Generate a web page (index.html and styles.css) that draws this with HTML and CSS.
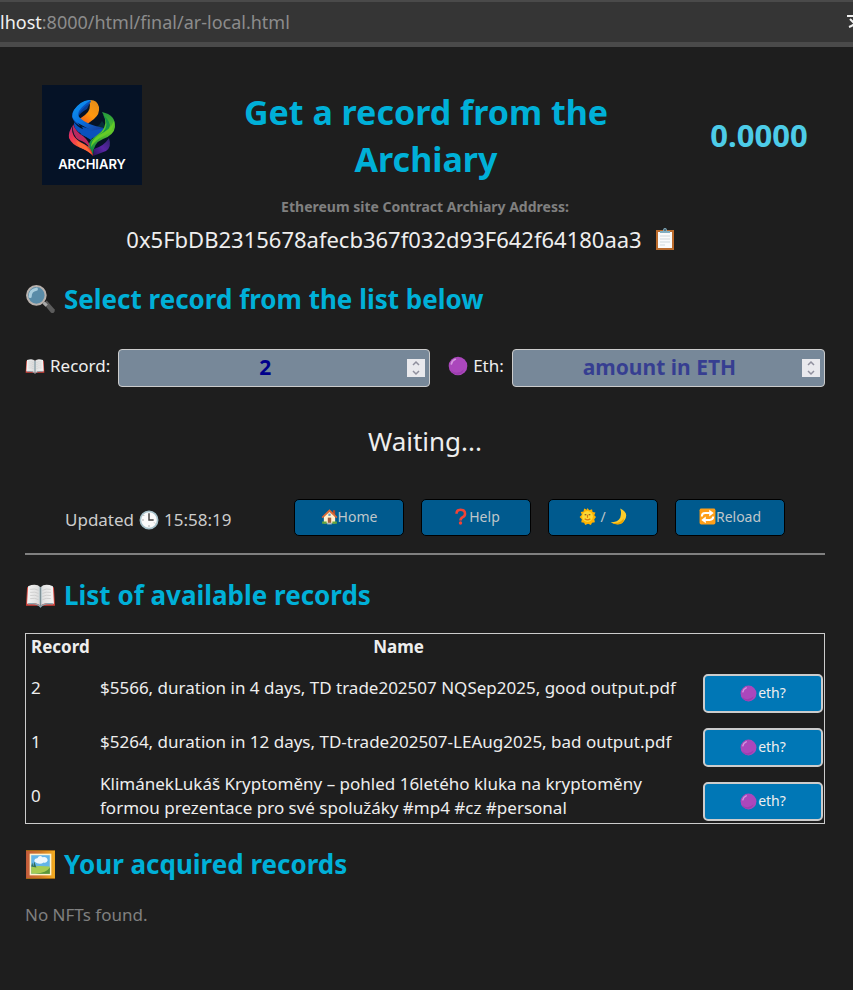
FILE: index.html
```html
<!DOCTYPE html>
<html lang="en">
<head>
<meta charset="utf-8">
<meta name="viewport" content="width=device-width, initial-scale=1">
<title>Archiary</title>
<link rel="stylesheet" href="styles.css">
</head>
<body>
<svg class="sprites" aria-hidden="true">
  <defs>
    <linearGradient id="g-frame" x2="1"><stop stop-color="#c45c3c"/><stop offset=".5" stop-color="#d07a28"/><stop offset="1" stop-color="#f5ad20"/></linearGradient>
    <linearGradient id="g-page" x2="1"><stop stop-color="#f4f4f4"/><stop offset=".42" stop-color="#dedede"/><stop offset=".5" stop-color="#9eb5bd"/><stop offset=".58" stop-color="#e2e2e2"/><stop offset="1" stop-color="#f4f4f4"/></linearGradient>
  </defs>
  <symbol id="i-search" viewBox="0 0 30 30">
    <path d="M18 19l3-3 7.500 8.500q1 2-.5 3t-3 0z" fill="#5c5c5c"/><path d="M18 18l3 3" stroke="#aaa" stroke-width="3"/>
    <circle cx="11" cy="11" r="9" fill="#5a8ca8" stroke="#b8b2ae" stroke-width="2"/><path d="M5 12q0-6 6-7" stroke="#a9cddd" stroke-width="3" fill="none" stroke-linecap="round"/>
  </symbol>
  <symbol id="i-book" viewBox="0 0 30 30">
    <path d="M2 7L1 25h12q2 1.500 4 0h12L28 7z" fill="#d9443c"/>
    <path d="M3 6q8-3 12 1 4-4 12-1l1 17q-9-2-13 2-4-4-13-2z" fill="url(#g-page)"/>
    <path d="M3 23q9-1 12 3 3-4 12-3" fill="none" stroke="#83aab6" stroke-width="1.200"/>
    <path d="M5 9q5-1 8 1M5 12q5-1 8 1M5 15q5-1 8 1M5 18q5-1 8 1M17 10q3-2 8-1M17 13q3-2 8-1M17 16q3-2 8-1M17 19q3-2 8-1" fill="none" stroke="#c9c9c9" stroke-width=".8"/>
    <path d="M15 7v18" stroke="#788a90" stroke-width=".8"/>
  </symbol>
  <symbol id="i-purple" viewBox="0 0 30 30">
    <circle cx="15" cy="15" r="14" fill="#ab47bc"/><path d="M4 21q9 9 20-1-2 7-9 8-8 0-11-7z" fill="#9c3dae"/><path d="M5 12q1-5 6-7" stroke="#d596df" stroke-width="2.500" fill="none" stroke-linecap="round"/>
  </symbol>
  <symbol id="i-clip" viewBox="0 0 22 24">
    <path d="M2 3h18v20H2z" fill="#bb6b2c"/><path d="M4 5h14v16H4z" fill="#fafafa"/><path d="M6 9h10M6 12h10M6 15h10M6 18h5" stroke="#cfd8dc"/>
    <path d="M6 6V4h3q0-3 2-3t2 3h3v2z" fill="#82aec0"/><circle cx="11" cy="3" r="1" fill="#48606c"/>
  </symbol>
  <symbol id="i-clock" viewBox="0 0 30 30">
    <circle cx="15" cy="15" r="13" fill="#fafafa" stroke="#a5c0c9" stroke-width="2.500"/><path d="M15 5v10h7" fill="none" stroke="#424242" stroke-width="2.200"/><path d="M5 15h2M15 23v2M23 19l1 1M7 8l1 1" stroke="#888" stroke-width="1.500"/>
  </symbol>
  <symbol id="i-home" viewBox="0 0 30 30">
    <path d="M21 4h4v9h-4z" fill="#b24a2a"/><path d="M5 15L15 5l10 10v12H5z" fill="#fff1cf"/><path d="M1 16L15 2l14 14-2 2L15 7 3 18z" fill="#d86a38"/><path d="M12 17h6v11h-6z" fill="#a45a3a"/><path d="M13 10h4v4h-4z" fill="#639fc3"/><path d="M2 24h8v4H2zM20 24h8v4h-8z" fill="#66a63a"/><path d="M11 26h8v3h-8z" fill="#b0bec5"/>
  </symbol>
  <symbol id="i-question" viewBox="0 0 30 30">
    <path d="M8 10Q8 3 15 3q8 0 8 7 0 4-4 6-4 2-4 6" fill="none" stroke="#f44336" stroke-width="4.500"/><circle cx="15" cy="26.500" r="3" fill="#f44336"/>
  </symbol>
  <symbol id="i-sun" viewBox="0 0 30 30">
    <path d="M15 0l3 4 5-2 1 5 5 1-2 5 3 3-3 4 1 5-5 1-2 4-5-2-5 2-2-4-5-1 1-5-4-4 4-4-2-5 5-1 1-5 5 2z" fill="#ffb300"/><circle cx="15" cy="15" r="9.500" fill="#fdd835"/><path d="M10 12h3M17 12h3" stroke="#76421f" stroke-width="2"/><path d="M15 12v5M10 19q5 4 10 0" fill="none" stroke="#d87910" stroke-width="2"/>
  </symbol>
  <symbol id="i-moon" viewBox="0 0 30 30"><path d="M18 1q16 8 8 20-9 13-25 4 13 0 17-8 3-8 0-16z" fill="#fdcc2b"/><path d="M3 26q16 2 21-8 2 10-10 11-7 0-11-3z" fill="#eda600"/></symbol>
  <symbol id="i-reload" viewBox="0 0 30 30">
    <rect x="1" y="1" width="28" height="28" rx="3" fill="#ff9f18"/><path d="M5 15q0-6 6-6h8M25 15q0 6-6 6h-8" fill="none" stroke="#fff" stroke-width="3.500"/><path d="M18 3l8 6-8 6zM12 15l-8 6 8 6z" fill="#fff"/>
  </symbol>
  <symbol id="i-frame" viewBox="0 0 30 30">
    <path d="M1 1h28v28H1z" fill="url(#g-frame)"/><path d="M1 1h28v1H1zM1 28h28v1H1z" fill="#a16813"/><path d="M4.500 4.500h21v21h-21z" fill="#fff3cf"/><path d="M6 6h18v18H6z" fill="#64b5e8"/><path d="M9 12q0-3 3-3 2-4 5-1 4-1 5 3-1 3-4 2-4 3-9-1z" fill="#eef7fc"/><path d="M6 17q8-1 18 0v7H6z" fill="#a6cc52"/><path d="M24 18q-3 5-14 6h14z" fill="#5a963b"/><path d="M6 17l1-4 1 4 1-5 2 6z" fill="#326e57"/>
  </symbol>
</svg>

<div class="browser-bar">
  <div class="url"><span class="host">lhost</span>:8000/html/final/ar-local.html</div>
  <svg class="translate" viewBox="0 0 16 20" aria-hidden="true"><path d="M0 4h16M7 1v3M3 7l10 10M12 5q-2 7-10 10" fill="none" stroke="#f0f0f0" stroke-width="2"/></svg>
</div>

<main class="page">
  <header class="top">
    <svg class="logo" viewBox="0 0 100 100" role="img" aria-label="Archiary logo">
      <defs>
        <linearGradient id="l-blue" x2=".8" y2="1"><stop stop-color="#109af5"/><stop offset=".55" stop-color="#0870df"/><stop offset="1" stop-color="#173997"/></linearGradient>
        <linearGradient id="l-orange" x1=".7" x2="0" y2="1"><stop stop-color="#e68d18"/><stop offset=".45" stop-color="#ff970e"/><stop offset="1" stop-color="#f24b16"/></linearGradient>
        <linearGradient id="l-green" x1=".3" x2=".2" y2="1"><stop stop-color="#279b3c"/><stop offset=".4" stop-color="#65c929"/><stop offset="1" stop-color="#007b47"/></linearGradient>
        <linearGradient id="l-red" x2=".8" y2="1"><stop stop-color="#a82c82"/><stop offset=".3" stop-color="#ee3457"/><stop offset=".7" stop-color="#ff6534"/><stop offset="1" stop-color="#e42b24"/></linearGradient>
        <linearGradient id="l-purple" x1="1" x2="0" y2="1"><stop stop-color="#30246b"/><stop offset=".5" stop-color="#5925a6"/><stop offset="1" stop-color="#281458"/></linearGradient>
      </defs>
      <rect width="100" height="100" fill="#051226"/>
      <path d="M44 46q12-2 16-10l6 8-14 13z" fill="#062f38"/>
      <path d="M67 53q3 9-3 13l-13 5 1-7q10-3 15-11z" fill="url(#l-purple)"/>
      <path d="M35 29q4-11 13-11l-3 6q-6 3-10 9z" fill="#083e92"/>
      <path d="M47 15q8-1 10 7 1 7-5 12l-8 6-8-5 7-5q7-5 4-15z" fill="url(#l-orange)"/>
      <path d="M48 15q-9 1-16 10-4 6 0 11 3 5 13 7l9 3-5 9q-4-3-11-6 5-3 2-7-7-5-5-10 3-7 14-15z" fill="#0753bf"/>
      <path d="M47 15q-9 1-15 10-4 7 2 12l20 11 8-5q-17-3-24-10-3-3-1-7 3-5 12-11z" fill="url(#l-blue)"/>
      <path d="M32 37q8 11 21 8l10-2-9 9q-7 3-14-3-9-4-8-12z" fill="#0b52bd"/>
      <path d="M60 27q14 3 13 15-1 8-12 12-10 4-10 16-7-8-2-15l10-8q8-8 1-20z" fill="url(#l-green)"/>
      <path d="M61 30q7 9 0 17L49 56q-5 5-2 10 1-7 10-12 10-6 11-14-2-7-7-10z" fill="#159348"/>
      <path d="M72 36q1 9-10 15-10 5-13 11 0-7 8-12 12-6 15-14z" fill="#65cb27"/>
      <path d="M31 40q-5 7-4 13 3 7 12 10 8 3 12 8-1-8-9-12-15-7-11-19z" fill="url(#l-red)"/>
      <path d="M31 39q3 8 10 12 7 6 7 12-4-6-11-8-7-4-6-16z" fill="#b92960"/>
      <path d="M34 56q11 3 17 15-4-5-14-9z" fill="#ff693a"/>
      <text x="50" y="84" text-anchor="middle" class="logo-text">ARCHIARY</text>
    </svg>
    <h1>Get a record from the Archiary</h1>
    <div class="balance">0.0000</div>
  </header>

  <section class="contract">
    <div class="contract-label">Ethereum site Contract Archiary Address:</div>
    <div class="address">0x5FbDB2315678afecb367f032d93F642f64180aa3
      <button class="copy" type="button" aria-label="Copy address"><svg aria-hidden="true"><use href="#i-clip"/></svg></button>
    </div>
  </section>

  <h2><svg class="icon-lg" aria-hidden="true"><use href="#i-search"/></svg>Select record from the list below</h2>

  <form class="fields">
    <div class="field">
      <label for="record"><svg class="icon" aria-hidden="true"><use href="#i-book"/></svg>Record:</label>
      <div class="number">
        <input id="record" type="number" value="2">
        <svg class="stepper" viewBox="0 0 18 18" aria-hidden="true"><path d="M6 6l3-3 3 3M6 12l3 3 3-3"/></svg>
      </div>
    </div>
    <div class="field">
      <label for="eth"><svg class="icon" aria-hidden="true"><use href="#i-purple"/></svg>Eth:</label>
      <div class="number">
        <input id="eth" type="number" placeholder="amount in ETH">
        <svg class="stepper" viewBox="0 0 18 18" aria-hidden="true"><path d="M6 6l3-3 3 3M6 12l3 3 3-3"/></svg>
      </div>
    </div>
  </form>

  <div class="status">Waiting...</div>

  <div class="toolbar">
    <div class="updated">Updated <svg class="icon" aria-hidden="true"><use href="#i-clock"/></svg> 15:58:19</div>
    <nav class="actions">
      <button type="button"><svg aria-hidden="true"><use href="#i-home"/></svg>Home</button>
      <button type="button"><svg aria-hidden="true"><use href="#i-question"/></svg>Help</button>
      <button type="button" class="theme" aria-label="Toggle theme"><svg aria-hidden="true"><use href="#i-sun"/></svg>/<svg aria-hidden="true"><use href="#i-moon"/></svg></button>
      <button type="button"><svg aria-hidden="true"><use href="#i-reload"/></svg>Reload</button>
    </nav>
  </div>

  <h2><svg class="icon-lg" aria-hidden="true"><use href="#i-book"/></svg>List of available records</h2>

  <table class="records">
    <thead><tr><th class="col-id">Record</th><th>Name</th><th class="col-action"></th></tr></thead>
    <tbody>
      <tr><td>2</td><td>$5566, duration in 4 days, TD trade202507 NQSep2025, good output.pdf</td><td><button type="button"><svg aria-hidden="true"><use href="#i-purple"/></svg>eth?</button></td></tr>
      <tr><td>1</td><td>$5264, duration in 12 days, TD-trade202507-LEAug2025, bad output.pdf</td><td><button type="button"><svg aria-hidden="true"><use href="#i-purple"/></svg>eth?</button></td></tr>
      <tr><td>0</td><td>KlimánekLukáš Kryptoměny – pohled 16letého kluka na kryptoměny formou prezentace pro své spolužáky #mp4 #cz #personal</td><td><button type="button"><svg aria-hidden="true"><use href="#i-purple"/></svg>eth?</button></td></tr>
    </tbody>
  </table>

  <h2><svg class="icon-lg" aria-hidden="true"><use href="#i-frame"/></svg>Your acquired records</h2>
  <p class="empty">No NFTs found.</p>
</main>
</body>
</html>
```
FILE: styles.css
```css
* { box-sizing: border-box; }
body {
  margin: 0;
  background: #1e1e1e;
  color: #eee;
  font: 17px/24px "Noto Sans", sans-serif;
}
.sprites { position: absolute; width: 0; height: 0; }

.browser-bar {
  display: flex;
  align-items: center;
  justify-content: space-between;
  height: 47px;
  overflow: hidden;
  border-top: 2px solid #4a4a4a;
  border-bottom: 5px solid #4a4a4a;
  background: #353535;
}
.url { font-size: 18px; color: #8c8c8c; white-space: nowrap; }
.host { color: #f0f0f0; }
.translate { width: 16px; height: 20px; margin-right: -10px; flex: none; }

.page { padding: 38px 28px 48px 25px; }
.top {
  display: grid;
  grid-template-columns: 134px 1fr 132px;
  column-gap: 34px;
  align-items: center;
}
.logo { width: 100px; height: 100px; justify-self: center; }
.logo-text { font: 600 13px Inter, sans-serif; fill: #fff; }
h1 {
  margin: 2px 0 0;
  font-size: 34px;
  line-height: 47px;
  text-align: center;
  color: #00b0d8;
}
.balance { font-size: 31px; font-weight: bold; text-align: center; color: #4dcce8; }

.contract { margin-top: 12px; text-align: center; }
.contract-label { font-size: 14px; line-height: 20px; font-weight: bold; color: #808080; }
.address {
  display: flex;
  justify-content: center;
  align-items: center;
  gap: 12px;
  margin: 7px 48px 0 0;
  font-size: 22px;
  line-height: 30px;
}
.copy { padding: 0; border: 0; background: none; }
.copy svg { display: block; width: 22px; height: 24px; }

h2 {
  display: flex;
  align-items: center;
  gap: 8px;
  margin: 0;
  font-size: 26px;
  line-height: 36px;
  color: #00b0d8;
}
.icon-lg { width: 31px; height: 31px; flex: none; }
.icon { width: 20px; height: 20px; flex: none; }
.contract + h2 { margin-top: 27px; }

.fields { display: flex; gap: 18px; margin-top: 32px; }
.field { display: flex; align-items: center; gap: 8px; flex: 1 1 auto; }
.field label { display: flex; align-items: center; gap: 5px; padding-bottom: 4px; }
.number { position: relative; flex: 1; }
.number input {
  display: block;
  width: 100%;
  height: 38px;
  padding: 0 24px 2px 6px;
  border: 1px solid #ccc;
  border-radius: 4px;
  background: #778899;
  color: #00008b;
  font: bold 21px/30px "Noto Sans", sans-serif;
  text-align: center;
  appearance: textfield;
}
.number input::-webkit-inner-spin-button { appearance: none; margin: 0; }
.number input::placeholder { color: #00008b; opacity: .54; }
.stepper {
  position: absolute;
  top: 10px;
  right: 5px;
  width: 18px;
  height: 18px;
  background: #e9e9ed;
  fill: none;
  stroke: #8f8f9d;
  stroke-width: 1.500;
  pointer-events: none;
}

.status { margin-top: 36px; font-size: 26px; line-height: 36px; text-align: center; }

.toolbar {
  display: flex;
  align-items: center;
  justify-content: space-between;
  margin-top: 40px;
  padding: 0 40px 17px;
  border-bottom: 2px solid #808080;
}
.updated { display: flex; align-items: center; gap: 5px; padding-top: 4px; color: #ccc; }
.actions { display: flex; gap: 17px; }
button { font: 14px/20px "Noto Sans", sans-serif; }
.actions button,
.records button {
  display: flex;
  align-items: center;
  justify-content: center;
  border-radius: 5px;
}
.actions button {
  width: 110px;
  height: 37px;
  padding: 0 6px 2px;
  border: 1px solid #000;
  background: #005a8e;
  color: #bfc6ca;
}
.actions svg { width: 17px; height: 17px; }
.actions .theme { gap: 4px; }
.toolbar + h2 { margin-top: 22px; }

.records {
  width: 100%;
  margin-top: 20px;
  border: 1px solid #ccc;
  border-spacing: 0;
}
.records th { height: 27px; padding: 1px 5px 0; line-height: 24px; vertical-align: top; }
.records td { height: 54px; padding: 0 5px; }
.records .col-id { width: 69px; text-align: left; }
.records .col-action { width: 122px; padding: 0; }
.records td:last-child { padding: 12px 1px 2px; }
.records button {
  width: 120px;
  height: 39px;
  border: 2px solid #ccc;
  background: #0077b6;
  color: #eee;
}
.records svg { width: 17px; height: 17px; margin-right: 1px; }
.records + h2 { margin-top: 22px; }
.empty { margin: 21px 0 0; color: #808080; }
```
